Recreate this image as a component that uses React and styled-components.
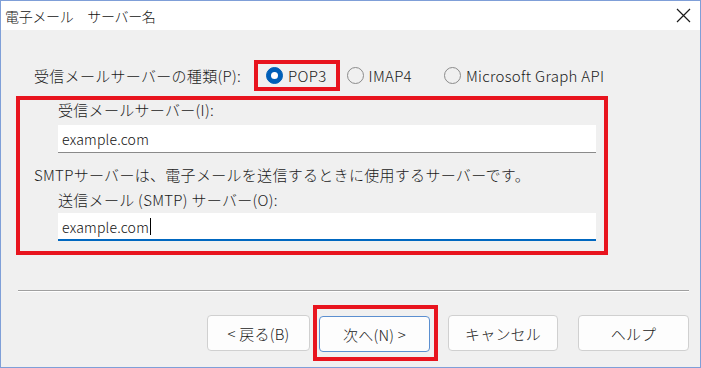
import styled, { createGlobalStyle } from 'styled-components'

const GlobalStyle = createGlobalStyle`
	html, body {
		margin: 0;
		padding: 0;
		background: #f0f0f0;
	}
	* {
		box-sizing: border-box;
	}
`

const Window = styled.div`
	width: 701px;
	height: 368px;
	border: 1px solid #7f9fd8;
	background: #f0f0f0;
	display: flex;
	flex-direction: column;
	font-family: 'Noto Sans CJK JP', 'Noto Sans', sans-serif;
	font-weight: 300;
	color: #1a1a1a;
	overflow: hidden;
`

const TitleBar = styled.div`
	height: 29px;
	background: #ffffff;
	display: flex;
	align-items: center;
	justify-content: space-between;
	padding: 0 9px 0 4px;
	font-size: 14px;
	letter-spacing: -0.3px;
	color: #111;
`

const CloseButton = styled.div`
	width: 16px;
	height: 16px;
	display: flex;
	align-items: center;
	justify-content: center;
`

const Body = styled.div`
	display: flex;
	flex-direction: column;
	font-size: 15px;
	letter-spacing: 0.3px;
`

const TypeRow = styled.div`
	display: flex;
	align-items: center;
	height: 31px;
	margin-top: 30px;
	padding-left: 33px;
`

const RowLabel = styled.span`
	margin-right: 13px;
	white-space: nowrap;
`

const Highlight = styled.div`
	border: 4px solid #e8141e;
`

const RadioHighlight = styled(Highlight)`
	display: flex;
	align-items: center;
	height: 31px;
	padding: 0 9px 0 8px;
`

const RadioOption = styled.label`
	display: flex;
	align-items: center;
	gap: 5px;
	margin-left: ${p => p.$gap || 0}px;
	white-space: nowrap;
`

const RadioCircle = styled.span`
	width: 17px;
	height: 17px;
	border-radius: 50%;
	flex-shrink: 0;
	display: flex;
	align-items: center;
	justify-content: center;
	background: ${p => (p.$checked ? '#005fb8' : 'transparent')};
	border: 1px solid ${p => (p.$checked ? '#005fb8' : '#8b8b8b')};
	&::after {
		content: '';
		display: ${p => (p.$checked ? 'block' : 'none')};
		width: 7px;
		height: 7px;
		border-radius: 50%;
		background: #ffffff;
	}
`

const ServerBox = styled(Highlight)`
	margin: 5px 0 0 15px;
	width: 592px;
	display: flex;
	flex-direction: column;
	padding: 0 8px 10px 14px;
`

const FieldLabel = styled.div`
	height: 20px;
	line-height: 20px;
	padding-left: ${p => p.$indent || 0}px;
	margin-top: ${p => p.$top || 0}px;
	white-space: nowrap;
`

const TextField = styled.div`
	margin: ${p => p.$top || 0}px 0 0 24px;
	height: 28px;
	background: #ffffff;
	border-bottom: ${p => (p.$focused ? '2px solid #0067c0' : '1px solid #8a8a8a')};
	display: flex;
	align-items: center;
	padding-left: 4px;
	padding-top: ${p => (p.$focused ? 1 : 0)}px;
	font-size: 14px;
	letter-spacing: 0.2px;
	color: #111;
`

const Caret = styled.span`
	display: inline-block;
	width: 1px;
	height: 17px;
	background: #000;
	margin-left: 1px;
`

const Separator = styled.div`
	margin: 35px 11px 0 17px;
	border-top: 1px solid #a0a0a0;
	border-bottom: 1px solid #ffffff;
`

const ButtonRow = styled.div`
	display: flex;
	align-items: center;
	justify-content: flex-end;
	margin-top: 13px;
	padding-right: 11px;
`

const Button = styled.button`
	width: ${p => p.$width || 111}px;
	height: 36px;
	margin-left: ${p => p.$gap || 0}px;
	background: #fdfdfd;
	border: 1px solid ${p => (p.$primary ? '#5b8fd0' : '#d0d0d0')};
	border-radius: 4px;
	font-family: inherit;
	font-weight: inherit;
	font-size: 15px;
	letter-spacing: 0.2px;
	color: #1a1a1a;
	padding: 0;
	white-space: pre;
`

const ButtonHighlight = styled(Highlight)`
	margin-left: 3px;
	padding: 7px 4px 5px 2px;
`

const App = () => {
	return (
		<>
			<GlobalStyle />
			<Window>
				<TitleBar>
					<span>電子メール　サーバー名</span>
					<CloseButton>
						<svg width='15' height='15' viewBox='0 0 15 15'>
							<path d='M1 1 L14 14 M14 1 L1 14' stroke='#1a1a1a' strokeWidth='1.2' />
						</svg>
					</CloseButton>
				</TitleBar>
				<Body>
					<TypeRow>
						<RowLabel>受信メールサーバーの種類(P):</RowLabel>
						<RadioHighlight>
							<RadioOption>
								<RadioCircle $checked />
								POP3
							</RadioOption>
						</RadioHighlight>
						<RadioOption $gap={7}>
							<RadioCircle />
							IMAP4
						</RadioOption>
						<RadioOption $gap={32}>
							<RadioCircle />
							Microsoft Graph API
						</RadioOption>
					</TypeRow>
					<ServerBox>
						<FieldLabel $indent={24}>受信メールサーバー(I):</FieldLabel>
						<TextField $top={5}>example.com</TextField>
						<FieldLabel $top={12}>
							SMTPサーバーは、電子メールを送信するときに使用するサーバーです。
						</FieldLabel>
						<FieldLabel $indent={24} $top={5}>
							送信メール (SMTP) サーバー(O):
						</FieldLabel>
						<TextField $top={3} $focused>
							example.com
							<Caret />
						</TextField>
					</ServerBox>
					<Separator />
					<ButtonRow>
						<Button $width={103}>{'< 戻る(B)'}</Button>
						<ButtonHighlight>
							<Button $primary>{'次へ(N) >'}</Button>
						</ButtonHighlight>
						<Button $width={110} $gap={10}>キャンセル</Button>
						<Button $gap={20}>ヘルプ</Button>
					</ButtonRow>
				</Body>
			</Window>
		</>
	)
}

export default App
